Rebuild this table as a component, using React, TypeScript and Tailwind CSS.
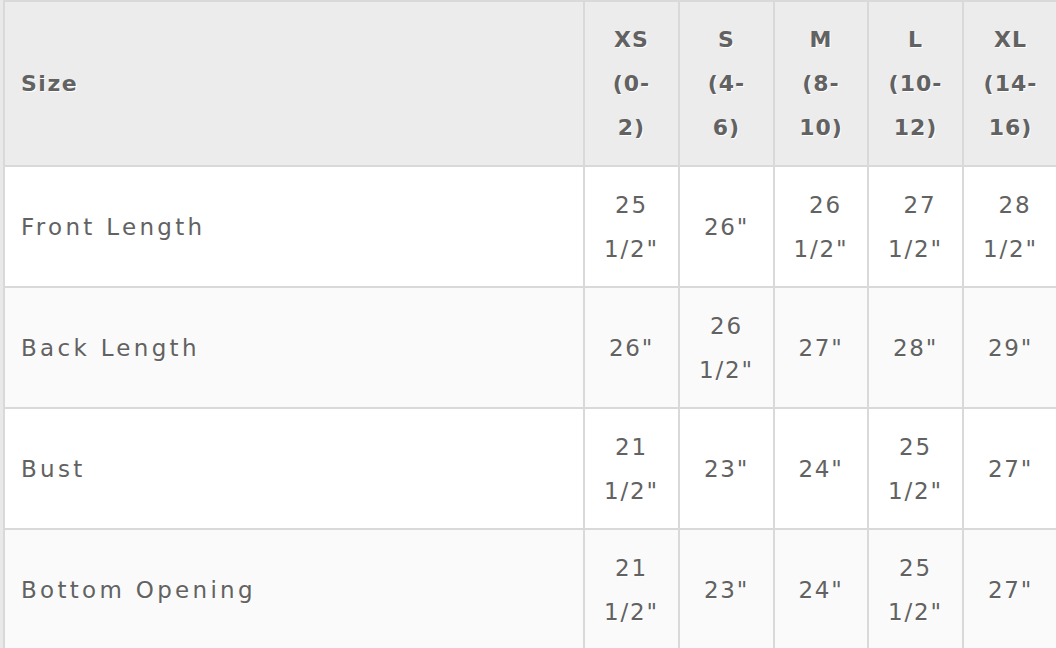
import React from "react";

type Row = { label: string; cells: string[][] };

const header: string[][] = [
  ["XS", "(0-", "2)"],
  ["S", "(4-", "6)"],
  ["M", "(8-", "10)"],
  ["L", "(10-", "12)"],
  ["XL", "(14-", "16)"],
];

const rows: Row[] = [
  {
    label: "Front Length",
    cells: [["25", '1/2"'], ['26"'], ["\u00a026", '1/2"'], ["\u00a027", '1/2"'], ["\u00a028", '1/2"']],
  },
  {
    label: "Back Length",
    cells: [['26"'], ["26", '1/2"'], ['27"'], ['28"'], ['29"']],
  },
  {
    label: "Bust",
    cells: [["21", '1/2"'], ['23"'], ['24"'], ["25", '1/2"'], ['27"']],
  },
  {
    label: "Bottom Opening",
    cells: [["21", '1/2"'], ['23"'], ['24"'], ["25", '1/2"'], ['27"']],
  },
];

function Lines({ lines }: { lines: string[] }) {
  return (
    <div className="flex flex-col items-center">
      {lines.map((l, i) => (
        <span key={i} className="block whitespace-pre">
          {l}
        </span>
      ))}
    </div>
  );
}

export default function App() {
  return (
    <div className="w-[1056px] h-[648px] overflow-hidden bg-[#e9e9e9] pl-[3px]">
      <div
        className="grid w-[1056px] gap-[2px] bg-[#d9d9d9] pl-[2px] pt-[2px] text-[#626262] text-[23px] leading-[44px] [text-shadow:1px_1px_0_#ffffff]"
        style={{ fontFamily: '"DejaVu Sans", "Liberation Sans", sans-serif' }}
      >
        <div className="grid grid-cols-[578px_93px_93px_92px_93px_93px] grid-rows-[163px_119px_119px_119px_119px] gap-[2px]">
          <div className="bg-[#ececec] flex items-center pl-[16px] font-bold text-[22px] tracking-[1.5px]">Size</div>
          {header.map((h, i) => (
            <div key={i} className="bg-[#ececec] flex items-center justify-center font-bold text-[22px] tracking-[1px]">
              <Lines lines={h} />
            </div>
          ))}
          {rows.map((r, ri) => {
            const bg = ri % 2 === 0 ? "bg-white" : "bg-[#fafafa]";
            return (
              <React.Fragment key={r.label}>
                <div className={`${bg} flex items-center pl-[16px] tracking-[3.3px]`}>{r.label}</div>
                {r.cells.map((c, ci) => (
                  <div key={ci} className={`${bg} flex items-center justify-center tracking-[1.8px]`}>
                    <Lines lines={c} />
                  </div>
                ))}
              </React.Fragment>
            );
          })}
        </div>
      </div>
    </div>
  );
}
